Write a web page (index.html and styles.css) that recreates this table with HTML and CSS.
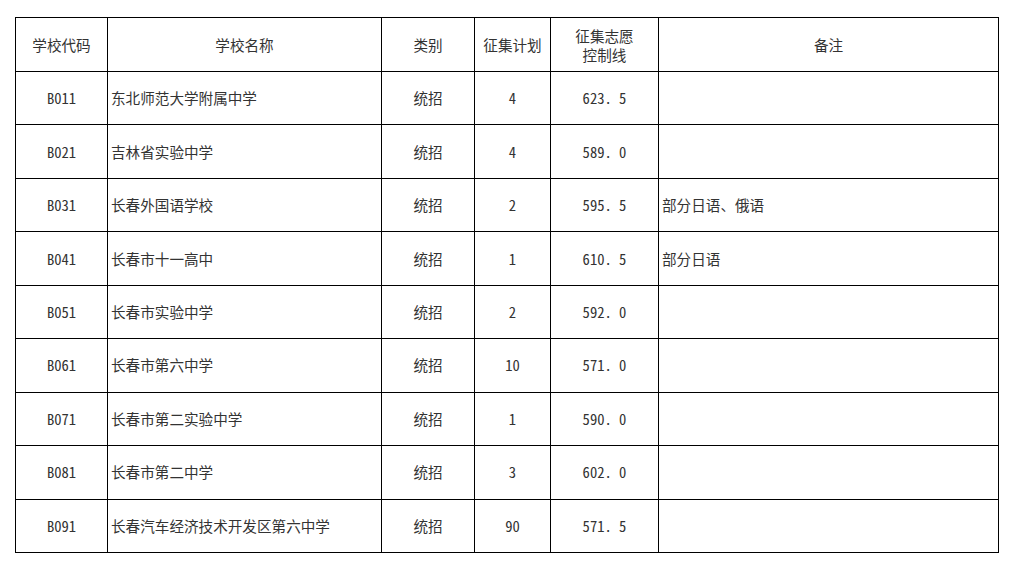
FILE: index.html
```html
<!DOCTYPE html>
<html lang="zh-CN">
<head>
<meta charset="utf-8">
<title>征集志愿</title>
<link rel="stylesheet" href="styles.css">
</head>
<body>
<table class="plan">
  <colgroup>
    <col class="c-code"><col class="c-name"><col class="c-type"><col class="c-plan"><col class="c-line"><col class="c-note">
  </colgroup>
  <thead>
    <tr class="head">
      <th>学校代码</th>
      <th>学校名称</th>
      <th>类别</th>
      <th>征集计划</th>
      <th class="two">征集志愿<br>控制线</th>
      <th>备注</th>
    </tr>
  </thead>
  <tbody>
    <tr><td class="num">B011</td><td class="left">东北师范大学附属中学</td><td>统招</td><td class="num">4</td><td class="num">623. 5</td><td class="left"></td></tr>
    <tr><td class="num">B021</td><td class="left">吉林省实验中学</td><td>统招</td><td class="num">4</td><td class="num">589. 0</td><td class="left"></td></tr>
    <tr><td class="num">B031</td><td class="left">长春外国语学校</td><td>统招</td><td class="num">2</td><td class="num">595. 5</td><td class="left">部分日语、俄语</td></tr>
    <tr><td class="num">B041</td><td class="left">长春市十一高中</td><td>统招</td><td class="num">1</td><td class="num">610. 5</td><td class="left">部分日语</td></tr>
    <tr><td class="num">B051</td><td class="left">长春市实验中学</td><td>统招</td><td class="num">2</td><td class="num">592. 0</td><td class="left"></td></tr>
    <tr><td class="num">B061</td><td class="left">长春市第六中学</td><td>统招</td><td class="num">10</td><td class="num">571. 0</td><td class="left"></td></tr>
    <tr><td class="num">B071</td><td class="left">长春市第二实验中学</td><td>统招</td><td class="num">1</td><td class="num">590. 0</td><td class="left"></td></tr>
    <tr><td class="num">B081</td><td class="left">长春市第二中学</td><td>统招</td><td class="num">3</td><td class="num">602. 0</td><td class="left"></td></tr>
    <tr><td class="num">B091</td><td class="left">长春汽车经济技术开发区第六中学</td><td>统招</td><td class="num">90</td><td class="num">571. 5</td><td class="left"></td></tr>
  </tbody>
</table>
</body>
</html>
```

FILE: styles.css
```css
html, body {
  margin: 0;
  padding: 0;
  background: #ffffff;
}
body {
  font-family: "Noto Sans CJK SC", "Noto Sans", sans-serif;
  font-size: 14.6px;
  color: #333333;
}
.plan {
  border-collapse: collapse;
  table-layout: fixed;
  width: 983px;
  margin: 17px 0 0 15px;
}
.c-code { width: 92px; }
.c-name { width: 274px; }
.c-type { width: 93px; }
.c-plan { width: 76px; }
.c-line { width: 108px; }
.c-note { width: 340px; }
.plan th, .plan td {
  border: 1px solid #000000;
  padding: 0 3px;
  text-align: center;
  vertical-align: middle;
  font-weight: normal;
  line-height: 18px;
  white-space: nowrap;
  overflow: hidden;
}
.plan th.two {
  line-height: 19px;
}
.plan .head {
  height: 54px;
}
.plan tbody tr {
  height: 53.44px;
}
.plan td.left {
  text-align: left;
}
.plan td.num {
  font-feature-settings: "hwid";
}
```
